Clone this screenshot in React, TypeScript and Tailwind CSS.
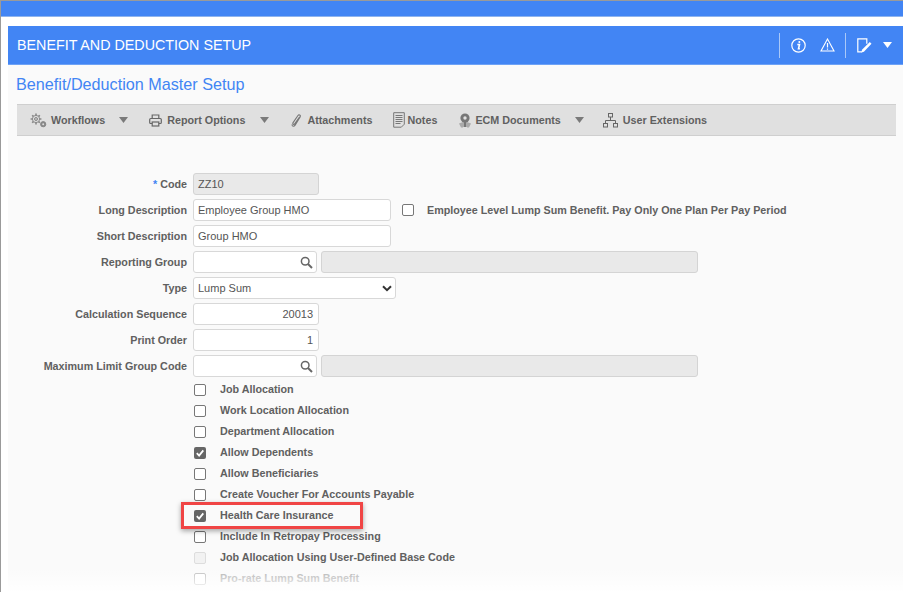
import React from "react";

const labelText = "text-[10.75px] font-bold text-[#606060] leading-none";
const inputBase = "h-[22px] rounded-[3px] border border-[#d8d8d8] bg-white text-[11px] text-[#555] flex items-center pl-[4px] pr-[5px] shrink-0";
const grayBase = "h-[22px] rounded-[3px] border border-[#d4d4d4] bg-[#e9e9e9] text-[11px] text-[#555] flex items-center pl-[4px] pr-[5px] shrink-0";

function Search() {
  return (
    <svg width="13" height="13" viewBox="0 0 13 13" className="ml-auto -mr-[2px]" fill="none" stroke="#666" strokeWidth="1.5">
      <circle cx="5.2" cy="5.2" r="3.8" />
      <path d="M8 8l4 4" strokeWidth="2" />
    </svg>
  );
}

function Row({ label, star, children }: { label: string; star?: boolean; children: React.ReactNode }) {
  return (
    <div className="flex items-center h-[22px]">
      <div className={`${labelText} w-[170px] text-right mr-[6px] shrink-0`}>
        {star && <span className="text-[#4285f4] mr-[3px]">*</span>}
        {label}
      </div>
      {children}
    </div>
  );
}

function Check({ checked, dim, faint }: { checked?: boolean; dim?: boolean; faint?: boolean }) {
  if (checked) {
    return (
      <span className="w-[12px] h-[12px] rounded-[2px] bg-[#666] flex items-center justify-center shrink-0">
        <svg width="10" height="10" viewBox="0 0 10 10" fill="none" stroke="#fff" strokeWidth="1.8">
          <path d="M1.8 5.2l2.3 2.4 4.2-5.2" />
        </svg>
      </span>
    );
  }
  return (
    <span
      className={`block w-[12px] h-[12px] rounded-[2px] border shrink-0 ${
        dim ? "border-[#ddd] bg-[#f2f2f2]" : faint ? "border-[#bbb] bg-white" : "border-[#777] bg-white"
      }`}
    />
  );
}

function CheckRow({ label, checked, dim, faint }: { label: string; checked?: boolean; dim?: boolean; faint?: boolean }) {
  return (
    <div className="flex items-center h-[12px] pl-[1px]">
      <Check checked={checked} dim={dim} faint={faint} />
      <span className={`${labelText} ml-[14px] pb-[1px] ${faint ? "opacity-50" : ""}`}>{label}</span>
    </div>
  );
}

function Caret({ color = "#7a7a7a", className }: { color?: string; className?: string }) {
  return (
    <svg width="9" height="6" viewBox="0 0 9 6" className={`shrink-0 ${className ?? ""}`}>
      <path d="M0 0h9L4.5 6z" fill={color} />
    </svg>
  );
}

function Tool({ icon, label, className, gap }: { icon: React.ReactNode; label: string; className?: string; gap: string }) {
  return (
    <div className={`flex items-center shrink-0 ${className ?? ""}`}>
      {icon}
      <span className={`text-[10.75px] font-bold text-[#606060] ${gap}`}>{label}</span>
    </div>
  );
}

const GearIcon = (
  <svg width="17" height="15" viewBox="0 0 17 15" fill="none" stroke="#888" strokeWidth="1">
    <path d="M6 .6v2M6 9.4v2M.6 6h2M9.4 6h2M2.2 2.2l1.4 1.4M8.4 8.4l1.4 1.4M2.2 9.8l1.4-1.4M8.4 3.6l1.4-1.4" strokeWidth="1.6" />
    <circle cx="6" cy="6" r="3.6" fill="#e0e0e0" />
    <circle cx="6" cy="6" r="1.5" fill="#c4c4c4" />
    <circle cx="13.2" cy="11.2" r="2.6" fill="#888" />
    <circle cx="13.2" cy="11.2" r="1" fill="#ddd" stroke="none" />
  </svg>
);
const PrintIcon = (
  <svg width="13" height="13" viewBox="0 0 13 13" fill="none" stroke="#666" strokeWidth="1.2">
    <path d="M3.2 4.5V1h6.6v3.5" />
    <rect x=".7" y="4.5" width="11.6" height="5" rx="1" />
    <rect x="3.2" y="8" width="6.6" height="4" fill="#e0e0e0" />
  </svg>
);
const ClipIcon = (
  <svg width="11" height="15" viewBox="0 0 12 15" fill="none" stroke="#777" strokeWidth="1.2">
    <path d="M9.5 3.5 4 11.2c-.8 1.2-2.6.2-1.9-1.1L7.6 2c1-1.4 3.3-.2 2.5 1.5L4.5 12.6c-1.1 1.6-3.6 1.7-3.3-.9" />
  </svg>
);
const NotesIcon = (
  <svg width="12" height="16" viewBox="0 0 12 16" fill="none" stroke="#777" strokeWidth="1">
    <path d="M.7.7h10.6v11.5l-3 3H.7z" />
    <path d="M2.5 3.5h7M2.5 5.5h7M2.5 7.5h7M2.5 9.5h7M2.5 11.5h5" />
  </svg>
);
const EcmIcon = (
  <svg width="14" height="15" viewBox="0 0 14 15">
    <path d="M1 10.5 5 9v5.5H3zM13 10.5 9 9v5.5h2z" fill="#aaa" />
    <circle cx="7" cy="5" r="4.6" fill="#777" />
    <circle cx="7" cy="5" r="1.7" fill="#e0e0e0" />
    <path d="M5.5 9h3v5h-3z" fill="#777" />
  </svg>
);
const TreeIcon = (
  <svg width="15" height="15" viewBox="0 0 15 15" fill="none" stroke="#666" strokeWidth="1">
    <rect x="5.5" y=".5" width="4" height="3.5" />
    <path d="M7.5 4v3.5M2.5 10.5v-3h10v3" />
    <rect x=".5" y="10.5" width="4" height="3.5" />
    <rect x="10.5" y="10.5" width="4" height="3.5" />
  </svg>
);

export default function App() {
  return (
    <div
      className="relative w-[903px] h-[592px] overflow-hidden bg-white border-t border-l border-[#9a9a9a] flex flex-col"
      style={{ fontFamily: '"Liberation Sans", Arial, sans-serif' }}
    >
      <div className="h-[16px] bg-[#4285f4] border-b border-[#8fb4ee] shrink-0" />
      <div className="flex-1 ml-[7px] mt-[9px] flex flex-col min-h-0">
        <div className="h-[39px] bg-[#4285f4] border-b border-[#6ea2f5] flex items-center pl-[9px] pr-[11px] shrink-0">
          <span className="text-white text-[14.3px] pt-[1px]">BENEFIT AND DEDUCTION SETUP</span>
          <div className="ml-auto flex items-center">
            <div className="w-px h-[25px] bg-[#a9c8f8]" />
            <svg width="15" height="15" viewBox="0 0 15 15" className="ml-[11px]" fill="none" stroke="#fff" strokeWidth="1.2">
              <circle cx="7.5" cy="7.5" r="6.7" />
              <circle cx="8.3" cy="4" r="1" fill="#fff" stroke="none" />
              <path d="M6.3 6.5h2.2l-1 4.2h1.4" strokeWidth="1.6" />
            </svg>
            <svg width="15" height="14" viewBox="0 0 15 14" className="ml-[14px]" fill="none" stroke="#fff" strokeWidth="1.1">
              <path d="M7.5 1 14 13H1z" />
              <path d="M7.5 5v4.5M7.5 10.5v1.2" strokeWidth="1.2" />
            </svg>
            <div className="w-px h-[25px] bg-[#a9c8f8] ml-[10px]" />
            <svg width="15" height="15" viewBox="0 0 15 15" className="ml-[11px]" fill="none" stroke="#fff" strokeWidth="1.2">
              <path d="M5 13.9H.8V.8h9v5" />
              <path d="M4.5 14.5 5 11.8 12.8 4l1.7 1.7-7.6 8z" fill="#fff" stroke="none" />
            </svg>
            <Caret color="#fff" className="ml-[11px]" />
          </div>
        </div>

        <div className="flex-1 bg-[#fafafa] pl-[9px] pr-[7px] min-h-0">
          <div className="text-[16.2px] leading-[18px] text-[#4285f4] mt-[10px] -ml-px">Benefit/Deduction Master Setup</div>
          <div className="h-[32px] mt-[11px] bg-[#e0e0e0] border-y border-[#cfcfcf] flex items-center pl-[13px]">
            <Tool icon={GearIcon} label="Workflows" gap="ml-[4px]" />
            <Caret className="ml-[14px]" />
            <Tool icon={PrintIcon} label="Report Options" className="ml-[21px]" gap="ml-[5px]" />
            <Caret className="ml-[15px]" />
            <Tool icon={ClipIcon} label="Attachments" className="ml-[22px]" gap="ml-[5px]" />
            <Tool icon={NotesIcon} label="Notes" className="ml-[20px]" gap="ml-[3px]" />
            <Tool icon={EcmIcon} label="ECM Documents" className="ml-[21px]" gap="ml-[3px]" />
            <Caret className="ml-[14px]" />
            <Tool icon={TreeIcon} label="User Extensions" className="ml-[19px]" gap="ml-[5px]" />
          </div>

          <div className="mt-[37px] flex flex-col gap-[4px]">
            <Row label="Code" star>
              <div className={`${grayBase} w-[126px]`}>ZZ10</div>
            </Row>
            <Row label="Long Description">
              <div className={`${inputBase} w-[198px]`}>Employee Group HMO</div>
              <div className="ml-[11px]"><Check /></div>
              <span className={`${labelText} ml-[13px]`}>Employee Level Lump Sum Benefit. Pay Only One Plan Per Pay Period</span>
            </Row>
            <Row label="Short Description">
              <div className={`${inputBase} w-[198px]`}>Group HMO</div>
            </Row>
            <Row label="Reporting Group">
              <div className={`${inputBase} w-[124px]`}><Search /></div>
              <div className={`${grayBase} w-[377px] ml-[4px]`} />
            </Row>
            <Row label="Type">
              <div className={`${inputBase} w-[203px]`}>
                Lump Sum
                <svg width="10" height="7" viewBox="0 0 10 7" className="ml-auto -mr-[2px]" fill="none" stroke="#333" strokeWidth="2">
                  <path d="M1 1.2l4 4 4-4" />
                </svg>
              </div>
            </Row>
            <Row label="Calculation Sequence">
              <div className={`${inputBase} w-[126px] justify-end`}>20013</div>
            </Row>
            <Row label="Print Order">
              <div className={`${inputBase} w-[126px] justify-end`}>1</div>
            </Row>
            <Row label="Maximum Limit Group Code">
              <div className={`${inputBase} w-[124px]`}><Search /></div>
              <div className={`${grayBase} w-[377px] ml-[4px]`} />
            </Row>
          </div>

          <div className="ml-[176px] mt-[7px] flex flex-col gap-[9px]">
            <CheckRow label="Job Allocation" />
            <CheckRow label="Work Location Allocation" />
            <CheckRow label="Department Allocation" />
            <CheckRow label="Allow Dependents" checked />
            <CheckRow label="Allow Beneficiaries" />
            <CheckRow label="Create Voucher For Accounts Payable" />
            <div className="relative">
              <CheckRow label="Health Care Insurance" checked />
              <div className="absolute left-[-12px] top-[-8px] w-[182px] h-[27px] border-[3px] border-[#f04545] shadow-[0_2px_5px_rgba(0,0,0,0.35)]" />
            </div>
            <CheckRow label="Include In Retropay Processing" />
            <CheckRow label="Job Allocation Using User-Defined Base Code" dim />
            <CheckRow label="Pro-rate Lump Sum Benefit" faint />
          </div>
        </div>
      </div>
      <div className="absolute left-0 right-0 bottom-0 h-[24px] bg-gradient-to-b from-transparent to-white" />
    </div>
  );
}
